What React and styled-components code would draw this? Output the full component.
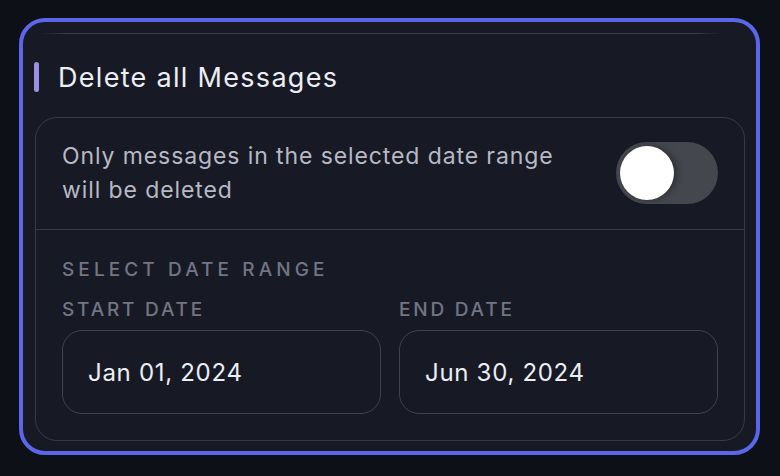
import React, {useState} from 'react';

//STYLING
import styled, {createGlobalStyle} from 'styled-components';


const GlobalStyle = createGlobalStyle`
    html, body {
        margin: 0;
        padding: 0;
        background-color: #0e1017;
    }
    body {
        font-family: Inter, "Noto Sans", "Liberation Sans", sans-serif;
        -webkit-font-smoothing: antialiased;
    }
`;

const Page = styled.div`
    width: 780px;
    height: 476px;
    padding: 18px 0 0 19px;
    box-sizing: border-box;
`;

const Card = styled.section`
    width: 741px;
    height: 437px;
    box-sizing: border-box;
    border: 4px solid #5b66ea;
    border-radius: 26px;
    background-color: #171a25;
    padding: 0 11px 10px 12px;
    display: flex;
    flex-direction: column;
`;

const TopRule = styled.div`
    height: 1px;
    margin: 11px 23px 0 5px;
    background: linear-gradient(90deg, rgba(58, 61, 74, 0) 0%, #3a3d4a 4%, #3a3d4a 96%, rgba(58, 61, 74, 0) 100%);
`;

const TitleRow = styled.div`
    display: flex;
    align-items: center;
    gap: 19px;
    height: 30px;
    margin: 28px 0 25px -1px;
`;

const AccentBar = styled.span`
    width: 5px;
    height: 30px;
    border-radius: 3px;
    background-color: #9d90e2;
`;

const Title = styled.h2`
    margin: 0;
    font-size: 27px;
    font-weight: 400;
    color: #eceef3;
    letter-spacing: 1.3px;
`;

const Panel = styled.div`
    flex: 1;
    border: 1px solid #373a48;
    border-radius: 22px;
    display: flex;
    flex-direction: column;
`;

const ToggleRow = styled.div`
    display: flex;
    align-items: center;
    justify-content: space-between;
    padding: 21px 26px 22px 26px;
    border-bottom: 1px solid #373a48;
`;

const ToggleText = styled.p`
    margin: 0;
    width: 510px;
    font-size: 23px;
    line-height: 34px;
    letter-spacing: 0.9px;
    color: #b7b9c4;
`;

const Switch = styled.button`
    width: 102px;
    height: 62px;
    border: none;
    border-radius: 31px;
    padding: 0 4px;
    background-color: ${props => props.on ? '#5b66ea' : '#45474f'};
    display: flex;
    align-items: center;
    justify-content: ${props => props.on ? 'flex-end' : 'flex-start'};
    cursor: pointer;
`;

const Knob = styled.span`
    width: 54px;
    height: 54px;
    border-radius: 50%;
    background-color: #ffffff;
    box-shadow: 3px 0 6px rgba(0, 0, 0, 0.35);
`;

const DateSection = styled.div`
    padding: 29px 26px 0 26px;
`;

const SectionLabel = styled.div`
    font-size: 19px;
    line-height: 22px;
    font-weight: 500;
    letter-spacing: ${props => props.wide ? '4.1px' : '2.8px'};
    color: #727584;
    text-transform: uppercase;
`;

const DateGrid = styled.div`
    display: grid;
    grid-template-columns: 1fr 1fr;
    column-gap: 18px;
    margin-top: 18px;
`;

const Field = styled.div`
    display: flex;
    flex-direction: column;
    gap: 9px;
`;

const DateInput = styled.div`
    height: 84px;
    box-sizing: border-box;
    border: 1px solid #3f4250;
    border-radius: 20px;
    padding: 0 25px;
    display: flex;
    align-items: center;
    font-size: 24px;
    letter-spacing: 0.7px;
    color: #eceef3;
`;


const App = () => {
    const [on, setOn] = useState(false);

    return(
        <Page>
            <GlobalStyle />
            <Card>
                <TopRule />
                <TitleRow>
                    <AccentBar />
                    <Title>Delete all Messages</Title>
                </TitleRow>
                <Panel>
                    <ToggleRow>
                        <ToggleText>Only messages in the selected date range will be deleted</ToggleText>
                        <Switch on={on} onClick={() => setOn(!on)}>
                            <Knob />
                        </Switch>
                    </ToggleRow>
                    <DateSection>
                        <SectionLabel wide>Select Date Range</SectionLabel>
                        <DateGrid>
                            <Field>
                                <SectionLabel>Start Date</SectionLabel>
                                <DateInput>Jan 01, 2024</DateInput>
                            </Field>
                            <Field>
                                <SectionLabel>End Date</SectionLabel>
                                <DateInput>Jun 30, 2024</DateInput>
                            </Field>
                        </DateGrid>
                    </DateSection>
                </Panel>
            </Card>
        </Page>
    )
}

export default App;
